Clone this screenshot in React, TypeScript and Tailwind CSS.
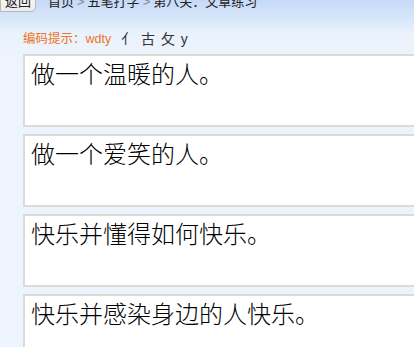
export default function App() {
  const lines = [
    "做一个温暖的人。",
    "做一个爱笑的人。",
    "快乐并懂得如何快乐。",
    "快乐并感染身边的人快乐。",
  ];

  return (
    <div
      className="w-[414px] h-[347px] overflow-hidden bg-[linear-gradient(to_bottom,#c6daf7_0px,#d5e4f9_16px,#eaf2fd_34px,#eef4fd_60px)]"
      style={{ fontFamily: '"Liberation Sans", "Noto Sans CJK SC", sans-serif' }}
    >
      {/* Top bar, cut off by the window */}
      <div className="flex items-center h-[20px] -mt-[8px] text-[13px] text-[#222]">
        <button className="h-[20px] w-[36px] pl-[4px] text-left border border-[#b9b9b9] rounded-br-[5px] bg-[linear-gradient(to_bottom,#fdfdfd,#ececec)] leading-[18px]">
          返回
        </button>
        <span className="flex ml-[12px] leading-[18px]">
          首页<span className="mx-[3px] text-[#888]">&gt;</span>五笔打字<span className="mx-[3px] text-[#888]">&gt;</span>第八关：文章练习
        </span>
      </div>

      {/* Code hint */}
      <div className="flex items-center mt-[18px] ml-[23px] h-[18px]">
        <span className="text-[12.5px] text-[#ee7424]">编码提示：wdty</span>
        <span className="ml-[10px] text-[14px] text-[#333] tracking-[1px]">亻 古 攵 y</span>
      </div>

      {/* Sentences */}
      <div className="flex flex-col gap-[7px] mt-[6px] ml-[23px] w-[400px]">
        {lines.map((line) => (
          <div
            key={line}
            className="h-[73px] bg-white border-2 border-[#dadada] pl-[6px] pt-[5px] text-[24px] leading-[28px] font-light text-black"
          >
            {line}
          </div>
        ))}
      </div>
    </div>
  );
}
